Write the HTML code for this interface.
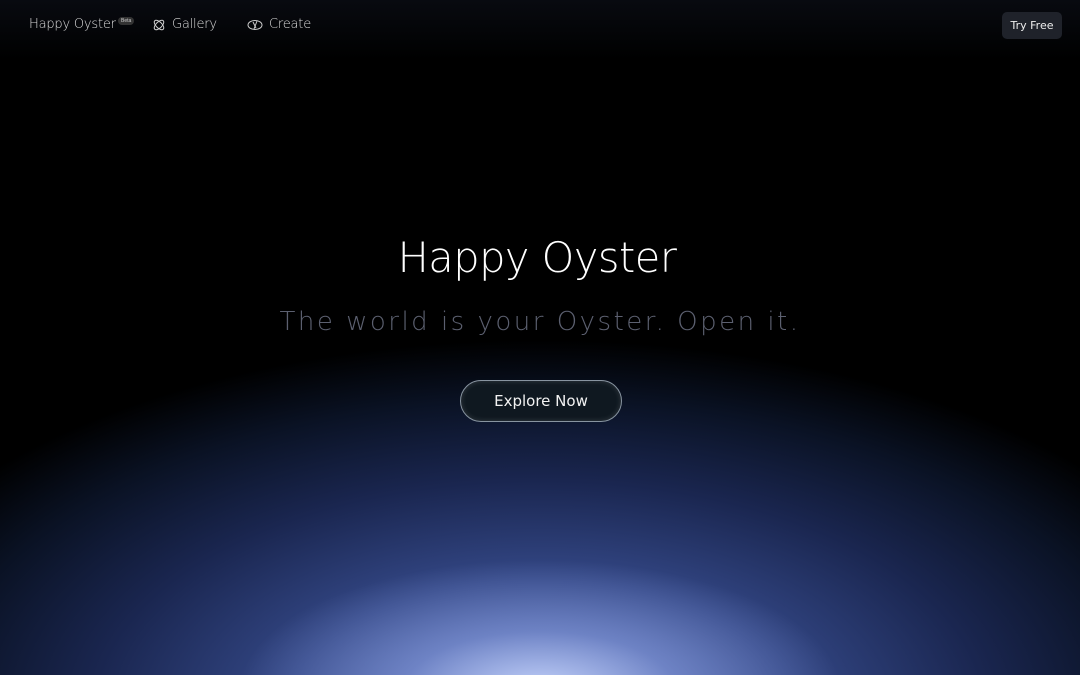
<!DOCTYPE html>
<html><head><meta charset="utf-8"><style>
html,body{margin:0;width:1080px;height:675px;overflow:hidden;background:#000;font-family:"Liberation Sans","DejaVu Sans",sans-serif;}
.bg{position:absolute;inset:0;background:
radial-gradient(ellipse 300px 130px at 540px 690px, rgba(205,218,255,0.9) 0%, rgba(150,170,235,0.5) 45%, rgba(100,125,210,0) 100%),
radial-gradient(ellipse 720px 370px at 540px 710px, #5f78c0 0%, #344887 35%, #1a2650 62%, #0a1224 84%, #000 100%);}
.top{position:absolute;left:0;right:0;top:0;height:60px;background:linear-gradient(#080a10,rgba(0,0,0,0));}
.nav{position:absolute;top:16px;font-size:13px;color:#ddd;font-family:"DejaVu Sans",sans-serif;font-weight:200;letter-spacing:-0.2px}
.beta{position:absolute;left:118px;top:17px;font-size:5px;background:#333;color:#ccc;border-radius:4px;padding:1px 3px}
.try{position:absolute;left:1002px;top:12px;width:60px;height:27px;background:#1f222a;border-radius:5px;color:#eee;font-size:11px;font-family:"DejaVu Sans",sans-serif;text-align:center;line-height:27px}
h1{position:absolute;top:233px;left:-3px;width:1080px;text-align:center;margin:0;font-weight:200;font-size:41.5px;color:#fff;font-family:"DejaVu Sans",sans-serif;letter-spacing:-0.5px}
.sub{position:absolute;top:307px;left:0;width:1080px;text-align:center;font-size:26px;color:#5c6070;font-family:"DejaVu Sans",sans-serif;font-weight:200;letter-spacing:2.5px}
.btn{position:absolute;left:460px;top:380px;width:160px;height:40px;border-radius:21px;border:1px solid #8894a0;box-shadow:inset 0 0 6px rgba(255,255,255,0.15);background:#0f1820;color:#f2f2f2;font-size:15px;font-family:"DejaVu Sans",sans-serif;text-align:center;line-height:40px}
</style></head><body>
<div class="bg"></div><div class="top"></div>
<div class="nav" style="left:29px;top:17px">Happy Oyster</div>
<div class="beta">Beta</div>
<svg style="position:absolute;left:152px;top:18px" width="14" height="14" viewBox="0 0 14 14" fill="none" stroke="#ccc" stroke-width="1"><ellipse cx="7" cy="7" rx="6" ry="3" transform="rotate(45 7 7)"/><ellipse cx="7" cy="7" rx="6" ry="3" transform="rotate(-45 7 7)"/></svg>
<div class="nav" style="left:172px;top:17px">Gallery</div>
<svg style="position:absolute;left:247px;top:18px" width="16" height="14" viewBox="0 0 16 14" fill="none" stroke="#ccc" stroke-width="1"><ellipse cx="8" cy="7" rx="7" ry="4.5"/><path d="M6 4l3 6M10 3l-3 8"/></svg>
<div class="nav" style="left:269px;top:17px">Create</div>
<div class="try">Try Free</div>
<h1>Happy Oyster</h1>
<div class="sub">The world is your Oyster. Open it.</div>
<div class="btn">Explore Now</div>
</body></html>
